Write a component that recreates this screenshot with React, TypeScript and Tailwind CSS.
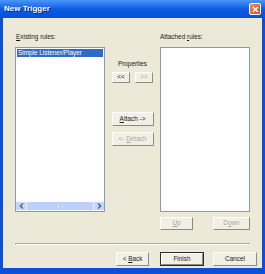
import React from "react";

const font = { fontFamily: '"Liberation Sans", Arial, sans-serif' };

type BtnProps = {
    children: React.ReactNode;
    className?: string;
    disabled?: boolean;
    isDefault?: boolean;
};

function XpButton({ children, className = "", disabled, isDefault }: BtnProps) {
    return (
        <div
            className={`flex items-center justify-center ${isDefault ? "border border-[#2b2b2b]" : ""} ${className}`}
        >
            <div
                className={`flex h-full w-full items-center justify-center border border-t-white border-l-white border-r-[#8e8c80] border-b-[#8e8c80] bg-[#f1efe6] text-[6.4px] leading-none ${disabled ? "text-[#aca899]" : "text-[#1a1a1a]"}`}
            >
                <span className="whitespace-pre">{children}</span>
            </div>
        </div>
    );
}

function ScrollArrow({ dir }: { dir: "left" | "right" }) {
    return (
        <div className="flex h-full w-[10px] items-center justify-center rounded-[1px] bg-[#c5d6fc]">
            <svg width="5" height="6" viewBox="0 0 5 6">
                {dir === "left" ? (
                    <path d="M4 0.5 L1.3 3 L4 5.5" stroke="#4d6185" strokeWidth="1.4" fill="none" />
                ) : (
                    <path d="M1 0.5 L3.7 3 L1 5.5" stroke="#4d6185" strokeWidth="1.4" fill="none" />
                )}
            </svg>
        </div>
    );
}

export default function App() {
    return (
        <div className="h-[274px] w-[265px] bg-[#0c4fd8]" style={font}>

            {/* Title Bar */}

            <div className="flex h-[18px] items-center justify-between bg-gradient-to-b from-[#4a96f7] via-[#0a5ce6] to-[#0650d6] pl-[4px] pr-[4px]">

                <span className="text-[8px] font-bold text-white [text-shadow:1px_1px_0_#0a1f7a]">
                    New Trigger
                </span>

                <div className="flex h-[12px] w-[12px] items-center justify-center rounded-[2px] border border-white bg-gradient-to-br from-[#f08a64] to-[#d4421c]">
                    <svg width="7" height="7" viewBox="0 0 7 7">
                        <path d="M1 1 L6 6 M6 1 L1 6" stroke="white" strokeWidth="1.5" />
                    </svg>
                </div>

            </div>

            {/* Body */}

            <div className="mx-[3px] flex h-[250px] flex-col bg-[#ece9d8]">

                <div className="flex pl-[12px] pt-[14px]">

                    {/* Existing rules */}

                    <div className="flex w-[90px] flex-col">

                        <div className="h-[15px] pl-[1px] text-[6.4px] leading-[10px] text-[#1a1a1a]">
                            <span className="underline">E</span>xisting rules:
                        </div>

                        <div className="flex h-[165px] flex-col border border-[#7f9db9] bg-white">

                            <div className="flex-1 p-[1px]">
                                <div className="h-[8px] bg-[#316ac5] pl-[1px] text-[6.4px] leading-[8px] text-white">
                                    Simple Listener/Player
                                </div>
                            </div>

                            <div className="flex h-[9px] gap-[1px] bg-[#eef2fd] pb-[1px]">
                                <ScrollArrow dir="left" />
                                <div className="flex flex-1 items-center justify-center rounded-[1px] bg-[#bdd0fa]">
                                    <div className="h-[3px] w-[5px] border-x border-[#e4ecfe]" />
                                </div>
                                <ScrollArrow dir="right" />
                            </div>

                        </div>

                    </div>

                    {/* Middle buttons */}

                    <div className="flex w-[55px] flex-col items-center pt-[27px]">

                        <div className="h-[10px] text-[6.4px] leading-[10px] text-[#1a1a1a]">
                            Properties
                        </div>

                        <div className="mt-[3px] flex gap-[5px]">
                            <XpButton className="h-[11px] w-[18px]">&lt;&lt;</XpButton>
                            <XpButton className="h-[11px] w-[18px]" disabled>&gt;&gt;</XpButton>
                        </div>

                        <XpButton className="mt-[29px] h-[14px] w-[42px]">
                            <span className="underline">A</span>ttach -&gt;
                        </XpButton>

                        <XpButton className="mt-[6px] h-[14px] w-[42px]" disabled>
                            &lt;- <span className="underline">D</span>etach
                        </XpButton>

                    </div>

                    {/* Attached rules */}

                    <div className="flex w-[90px] flex-col">

                        <div className="h-[15px] text-[6.4px] leading-[10px] text-[#1a1a1a]">
                            Attached <span className="underline">r</span>ules:
                        </div>

                        <div className="h-[165px] border border-[#7f9db9] bg-white" />

                        <div className="mt-[5px] flex justify-between">
                            <XpButton className="h-[13px] w-[33px]" disabled>
                                <span className="underline">U</span>p
                            </XpButton>
                            <XpButton className="h-[13px] w-[37px]" disabled>
                                D<span className="underline">o</span>wn
                            </XpButton>
                        </div>

                    </div>

                </div>

                {/* Divider */}

                <div className="ml-[12px] mr-[12px] mt-[13px] h-[2px] border-t border-t-[#aca899] border-b border-b-white" />

                {/* Bottom buttons */}

                <div className="mt-[7px] flex justify-end pr-[5px]">
                    <XpButton className="h-[14px] w-[33px]">
                        &lt; <span className="underline">B</span>ack
                    </XpButton>
                    <XpButton className="ml-[11px] h-[14px] w-[44px]" isDefault>
                        Finish
                    </XpButton>
                    <XpButton className="ml-[9px] h-[14px] w-[44px]">
                        Cancel
                    </XpButton>
                </div>

            </div>

        </div>
    );
}
